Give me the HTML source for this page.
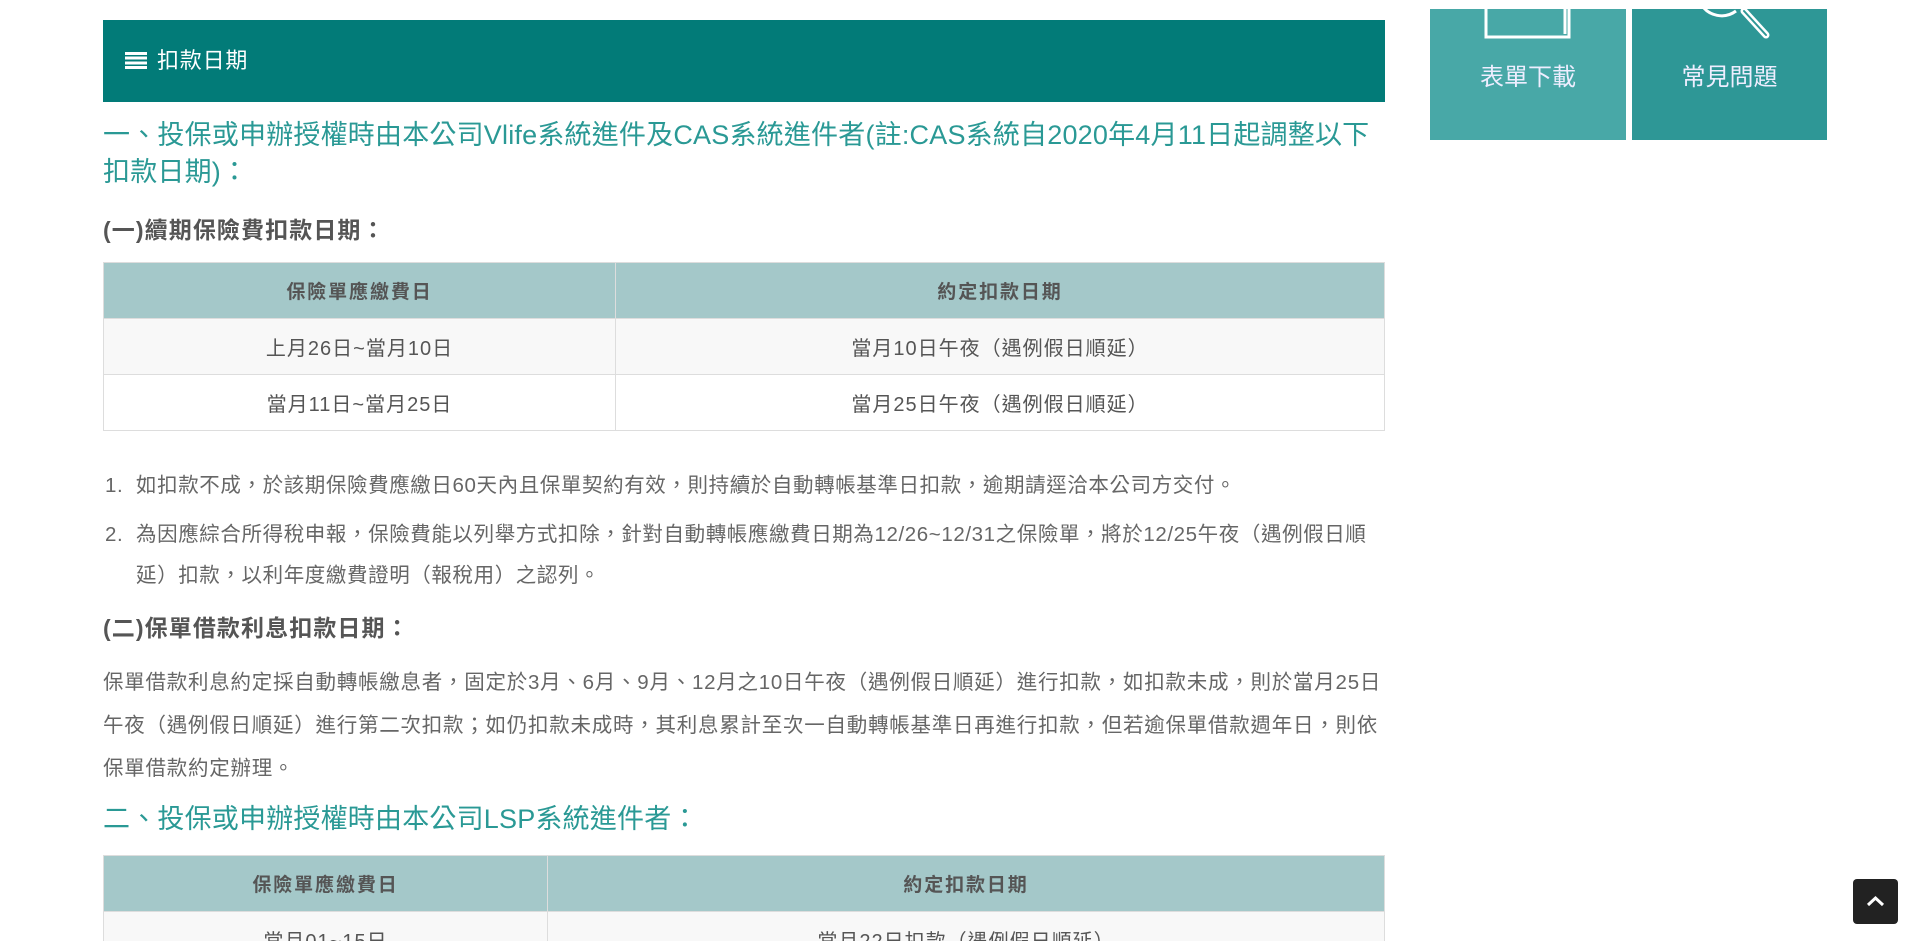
<!DOCTYPE html>
<html><head><meta charset="utf-8"><style>
*{margin:0;padding:0;box-sizing:border-box}
html,body{width:1920px;height:941px;overflow:hidden;background:#fff}
body{font-family:"Liberation Sans","Noto Sans CJK TC",sans-serif;color:#666;position:relative}
.abs{position:absolute}
.bar{left:103px;top:20px;width:1282px;height:82px;background:#027b78;color:#fff;font-size:22px;line-height:82px;padding-left:22px;letter-spacing:0.8px}
.bar .ic{display:inline-block;width:22px;height:17px;vertical-align:-1px;margin-right:10px;background:repeating-linear-gradient(#fff 0 3px,transparent 3px 4.7px)}
.h{left:103px;color:#2a9995;font-size:27px;line-height:37px;width:1320px;letter-spacing:0.2px}
.sub{left:103px;color:#555;font-weight:bold;font-size:23px;letter-spacing:1.1px}
table{position:absolute;left:103px;width:1282px;border-collapse:collapse;font-size:20px;color:#555;text-align:center;letter-spacing:1px}
td,th{border:1px solid #ddd;height:56px}
th{background:#a4c8c9;font-weight:bold;font-size:19px;color:#555;letter-spacing:1.9px}
tr.o td{background:#f8f8f8}
.li{left:105px;font-size:20.5px;line-height:41px;width:1320px;color:#666;letter-spacing:0.6px}
.li .n{position:absolute;left:0}
.li .t{padding-left:31px}
.p{left:103px;font-size:20.5px;line-height:43px;width:1320px;color:#666;letter-spacing:0.75px}
.tile{top:9px;height:131px;color:#eef;font-size:24px;text-align:center;overflow:hidden}
</style></head><body>
<div class="abs bar"><span class="ic"></span>扣款日期</div>
<div class="abs h" style="top:117px">一、投保或申辦授權時由本公司Vlife系統進件及CAS系統進件者(註:CAS系統自2020年4月11日起調整以下<br>扣款日期)：</div>
<div class="abs sub" style="top:211px">(一)續期保險費扣款日期：</div>
<table style="top:262px">
<tr><th style="width:512px">保險單應繳費日</th><th>約定扣款日期</th></tr>
<tr class="o"><td>上月26日~當月10日</td><td>當月10日午夜（遇例假日順延）</td></tr>
<tr><td>當月11日~當月25日</td><td>當月25日午夜（遇例假日順延）</td></tr>
</table>
<div class="abs li" style="top:465px"><span class="n">1.</span><div class="t">如扣款不成，於該期保險費應繳日60天內且保單契約有效，則持續於自動轉帳基準日扣款，逾期請逕洽本公司方交付。</div></div>
<div class="abs li" style="top:514px"><span class="n">2.</span><div class="t">為因應綜合所得稅申報，保險費能以列舉方式扣除，針對自動轉帳應繳費日期為12/26~12/31之保險單，將於12/25午夜（遇例假日順<br>延）扣款，以利年度繳費證明（報稅用）之認列。</div></div>
<div class="abs sub" style="top:609px">(二)保單借款利息扣款日期：</div>
<div class="abs p" style="top:661px">保單借款利息約定採自動轉帳繳息者，固定於3月、6月、9月、12月之10日午夜（遇例假日順延）進行扣款，如扣款未成，則於當月25日<br>午夜（遇例假日順延）進行第二次扣款；如仍扣款未成時，其利息累計至次一自動轉帳基準日再進行扣款，但若逾保單借款週年日，則依<br>保單借款約定辦理。</div>
<div class="abs h" style="top:801px">二、投保或申辦授權時由本公司LSP系統進件者：</div>
<table style="top:855px">
<tr><th style="width:444px">保險單應繳費日</th><th>約定扣款日期</th></tr>
<tr class="o"><td>當月01~15日</td><td>當月22日扣款（遇例假日順延）</td></tr>
</table>
<div class="abs tile" style="left:1430px;width:196px;background:#48a8a7">
<svg class="abs" style="left:0;top:0" width="196" height="40"><path d="M56 -5 V28 H139 V-5 M135 -5 V25" fill="none" stroke="#fff" stroke-width="3"/></svg>
<div class="abs" style="left:0;right:0;top:48px">表單下載</div></div>
<div class="abs tile" style="left:1632px;width:195px;background:#2e9796">
<svg class="abs" style="left:0;top:0" width="195" height="40"><path d="M69 -5 A24 24 0 0 0 104 2" fill="none" stroke="#fff" stroke-width="3"/><path d="M112 2 L134 26" stroke="#fff" stroke-width="7" stroke-linecap="round"/><path d="M112 2 L134 26" stroke="#2e9796" stroke-width="2" stroke-linecap="round"/></svg>
<div class="abs" style="left:0;right:0;top:48px">常見問題</div></div>
<div class="abs" style="left:1853px;top:879px;width:45px;height:45px;background:#222;border-radius:4px">
<svg width="45" height="45"><path d="M15 26 L22.5 19 L30 26" fill="none" stroke="#fff" stroke-width="3"/></svg></div>
</body></html>
